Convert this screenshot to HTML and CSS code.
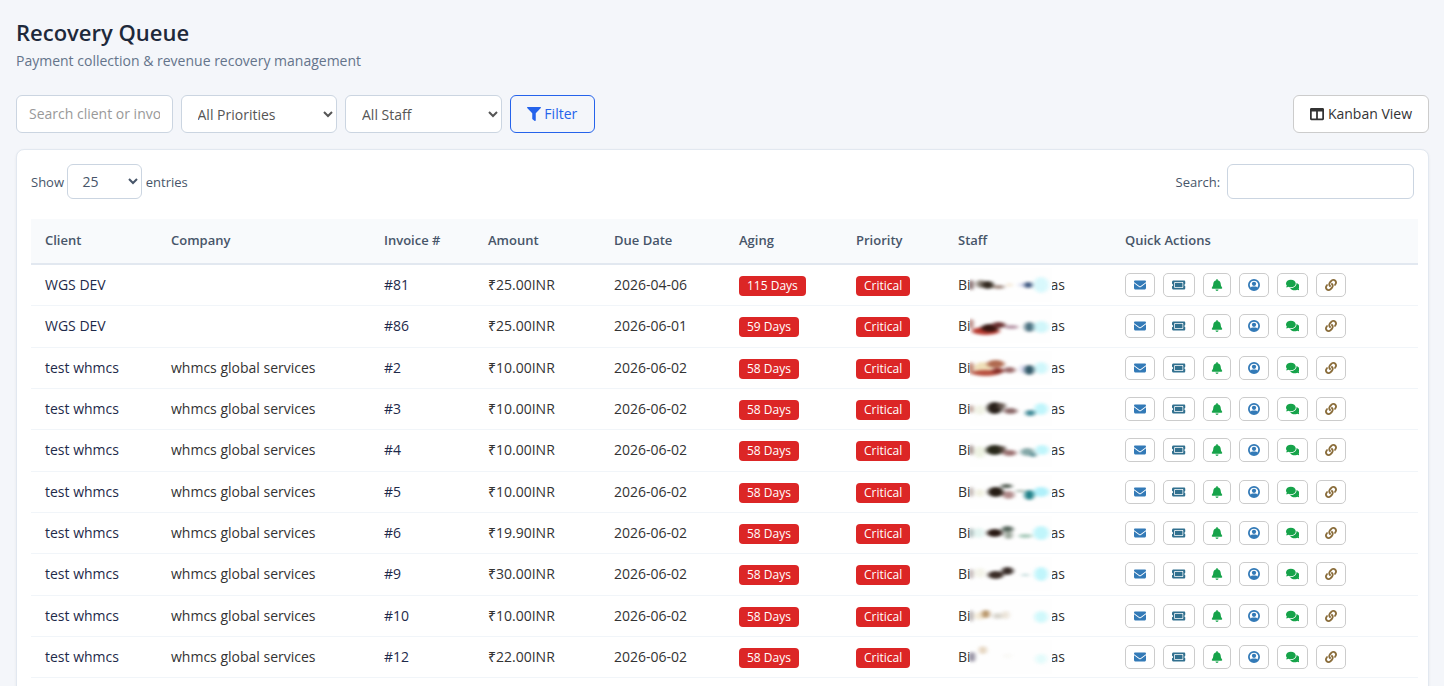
FILE: index.html
```html
<!DOCTYPE html>
<html lang="en">
<head>
    <meta charset="UTF-8">
    <meta name="viewport" content="width=device-width, initial-scale=1.0">
    <title>Recovery Queue</title>
    <link rel="stylesheet" href="styles.css">
</head>
<body>

    <!-- Icons -->
    <svg class="sprite">
        <symbol id="i-filter" viewBox="0 0 512 512"><path d="M487.976 0H24.028C2.71 0-8.047 25.866 7.058 40.971L192 225.941V432c0 7.831 3.821 15.17 10.237 19.662l80 55.98C298.02 518.69 320 507.493 320 487.98V225.941l184.947-184.97C520.021 25.896 509.338 0 487.976 0z"/></symbol>
        <symbol id="i-columns" viewBox="0 0 512 512"><path d="M464 32H48C21.49 32 0 53.49 0 80v352c0 26.51 21.49 48 48 48h416c26.51 0 48-21.49 48-48V80c0-26.51-21.49-48-48-48zM224 416H64V160h160v256zm224 0H288V160h160v256z"/></symbol>
        <symbol id="i-mail" viewBox="0 0 512 512"><path d="M48 64C21.5 64 0 85.5 0 112c0 15.1 7.1 29.3 19.2 38.4L236.8 313.6c11.4 8.5 27 8.5 38.4 0L492.8 150.4c12.1-9.1 19.2-23.3 19.2-38.4c0-26.5-21.5-48-48-48L48 64zM0 176L0 384c0 35.3 28.7 64 64 64l384 0c35.3 0 64-28.7 64-64l0-208L294.4 339.2c-22.8 17.1-54 17.1-76.8 0L0 176z"/></symbol>
        <symbol id="i-ticket" viewBox="0 0 576 512"><path fill-rule="evenodd" d="M64 64C28.7 64 0 92.7 0 128l0 64c0 8.8 7.4 15.7 15.7 18.6C34.5 217.1 48 235 48 256s-13.5 38.9-32.3 45.4C7.4 304.3 0 311.2 0 320l0 64c0 35.3 28.7 64 64 64l448 0c35.3 0 64-28.7 64-64l0-64c0-8.8-7.4-15.7-15.7-18.6C541.5 294.9 528 277 528 256s13.5-38.9 32.3-45.4c8.3-2.9 15.7-9.8 15.7-18.6l0-64c0-35.3-28.7-64-64-64L64 64zM128 128h320a32 32 0 0 1 32 32v192a32 32 0 0 1-32 32H128a32 32 0 0 1-32-32V160a32 32 0 0 1 32-32zM144 160a16 16 0 0 0-16 16v160a16 16 0 0 0 16 16h288a16 16 0 0 0 16-16V176a16 16 0 0 0-16-16z"/></symbol>
        <symbol id="i-bell" viewBox="0 0 448 512"><path d="M224 0c-17.7 0-32 14.3-32 32l0 19.2C119 66 64 130.6 64 208l0 18.8c0 47-17.3 92.4-48.5 127.6l-7.4 8.3c-8.4 9.4-10.4 22.9-5.3 34.4S19.4 416 32 416l384 0c12.6 0 24-7.4 29.2-18.9s3.1-25-5.3-34.4l-7.4-8.3C401.3 319.2 384 273.9 384 226.8l0-18.8c0-77.4-55-142-128-156.8L256 32c0-17.7-14.3-32-32-32zm45.3 493.3c12-12 18.7-28.3 18.7-45.3l-64 0-64 0c0 17 6.7 33.3 18.7 45.3s28.3 18.7 45.3 18.7s33.3-6.7 45.3-18.7z"/></symbol>
        <symbol id="i-user" viewBox="0 0 512 512"><path fill-rule="evenodd" d="M256 0a256 256 0 1 0 0 512a256 256 0 1 0 0-512zM256 72a184 184 0 0 1 150 290c-22-30-56-46-96-46H202c-40 0-74 16-96 46A184 184 0 0 1 256 72z"/><circle cx="256" cy="205" r="92"/></symbol>
        <symbol id="i-chat" viewBox="0 0 576 512"><path d="M416 192c0-88.4-93.1-160-208-160S0 103.6 0 192c0 34.3 14.1 65.9 38 92-13.4 30.2-35.5 54.2-35.8 54.5-2.2 2.3-2.8 5.7-1.5 8.7S4.8 352 8 352c36.6 0 66.9-12.3 88.7-25 32.2 15.7 70.3 25 111.3 25 114.9 0 208-71.6 208-160zm122 220c23.9-26 38-57.7 38-92 0-66.9-53.5-124.2-129.3-148.1.9 6.6 1.3 13.3 1.3 20.1 0 105.9-107.7 192-240 192-10.8 0-21.3-.8-31.7-1.9C207.8 439.6 281.8 480 368 480c41 0 79.1-9.2 111.3-25 21.8 12.7 52.1 25 88.7 25 3.2 0 6.1-1.9 7.3-4.8 1.3-2.9.7-6.3-1.5-8.7-.3-.3-22.4-24.2-35.8-54.5z"/></symbol>
        <symbol id="i-link" viewBox="0 0 512 512"><path d="M326.612 185.391c59.747 59.809 58.927 155.698.36 214.59-.11.12-.24.25-.36.37l-67.2 67.2c-59.27 59.27-155.699 59.262-214.96 0-59.27-59.26-59.27-155.7 0-214.96l37.106-37.106c9.84-9.84 26.786-3.3 27.294 10.606.648 17.722 3.826 35.527 9.69 52.721 1.986 5.822.567 12.262-3.783 16.612l-13.087 13.087c-28.026 28.026-28.905 73.66-1.155 101.96 28.024 28.579 74.086 28.749 102.325.51l67.2-67.19c28.191-28.191 28.073-73.757 0-101.83-3.701-3.694-7.429-6.564-10.341-8.569a16.037 16.037 0 0 1-6.947-12.606c-.396-10.567 3.348-21.456 11.698-29.806l21.054-21.055c5.521-5.521 14.182-6.199 20.584-1.731a152.482 152.482 0 0 1 20.522 17.197zM467.547 44.449c-59.261-59.262-155.69-59.27-214.96 0l-67.2 67.2c-.12.12-.25.25-.36.37-58.566 58.892-59.387 154.781.36 214.59a152.454 152.454 0 0 0 20.521 17.196c6.402 4.468 15.064 3.789 20.584-1.731l21.054-21.055c8.35-8.35 12.094-19.239 11.698-29.806a16.037 16.037 0 0 0-6.947-12.606c-2.912-2.005-6.64-4.875-10.341-8.569-28.073-28.073-28.191-73.639 0-101.83l67.2-67.19c28.239-28.239 74.3-28.069 102.325.51 27.75 28.3 26.872 73.934-1.155 101.96l-13.087 13.087c-4.35 4.35-5.769 10.79-3.783 16.612 5.864 17.194 9.042 34.999 9.69 52.721.509 13.906 17.454 20.446 27.294 10.606l37.106-37.106c59.271-59.259 59.271-155.699.001-214.959z"/></symbol>
    </svg>

    <h1>Recovery Queue</h1>
    <p class="subtitle">Payment collection &amp; revenue recovery management</p>

    <!-- Filters -->
    <div class="toolbar">
        <input type="text" class="field" placeholder="Search client or invoice">
        <select class="field">
            <option>All Priorities</option>
        </select>
        <select class="field">
            <option>All Staff</option>
        </select>
        <button class="btn btn-primary"><svg class="icon"><use href="#i-filter"/></svg> Filter</button>
        <button class="btn btn-default"><svg class="icon"><use href="#i-columns"/></svg> Kanban View</button>
    </div>

    <div class="card">
        <div class="table-top">
            <label>Show
                <select class="length">
                    <option>25</option>
                </select>
                entries</label>
            <label class="search">Search: <input type="search"></label>
        </div>

        <table>
            <colgroup>
                <col class="c-client">
                <col class="c-company">
                <col class="c-invoice">
                <col class="c-amount">
                <col class="c-due">
                <col class="c-aging">
                <col class="c-priority">
                <col class="c-staff">
                <col class="c-actions">
            </colgroup>
            <thead>
                <tr>
                    <th>Client</th>
                    <th>Company</th>
                    <th>Invoice #</th>
                    <th>Amount</th>
                    <th>Due Date</th>
                    <th>Aging</th>
                    <th>Priority</th>
                    <th>Staff</th>
                    <th>Quick Actions</th>
                </tr>
            </thead>
            <tbody id="queue"></tbody>
        </table>
    </div>

    <script src="queue.js"></script>
</body>
</html>
```

FILE: styles.css
```css
* {
    box-sizing: border-box;
}
body {
    margin: 0;
    padding: 18px 15px 0 16px;
    height: 686px;
    overflow: hidden;
    background: #f4f6fa;
    color: #333;
    font-family: "Open Sans", "Noto Sans", sans-serif;
    font-size: 14px;
    line-height: 20px;
}
input, select, button {
    font-family: inherit;
    font-size: 14px;
}
.sprite {
    display: none;
}
h1 {
    margin: 0;
    font-size: 22px;
    font-weight: 600;
    line-height: 28px;
    color: #1e293b;
}
.subtitle {
    margin: 5px 0 24px;
    color: #64748b;
}

/* Filters */
.toolbar {
    display: flex;
    gap: 8px;
    margin-bottom: 16px;
}
.field {
    width: 156.5px;
    height: 38px;
    padding: 6px 12px;
    background: #fff;
    border: 1px solid #cbd5e1;
    border-radius: 6px;
    color: #555;
}
input.field {
    padding-bottom: 8px;
}
.field::placeholder {
    color: #999;
}
.btn {
    height: 38px;
    padding: 0 16px 2px;
    border: 1px solid #ccc;
    border-radius: 6px;
    background: #fff;
    color: #333;
    white-space: nowrap;
}
.btn .icon {
    width: 14px;
    height: 14px;
    vertical-align: -2px;
}
.btn-primary {
    width: 85px;
    background: transparent;
    border-color: #2563eb;
    color: #2563eb;
}
.btn-default {
    margin-left: auto;
}
.icon {
    fill: currentColor;
}

/* Card */
.card {
    height: 545px;
    padding: 14px;
    background: #fff;
    border: 1px solid #e2e8f0;
    border-radius: 8px;
    box-shadow: 0 1px 3px rgba(15, 23, 42, 0.06);
}
.table-top {
    display: flex;
    justify-content: space-between;
    margin-bottom: 20px;
    font-size: 13px;
    color: #475569;
}
.length {
    width: 75px;
    height: 35px;
    padding: 5px 10px;
    background: #fff;
    border: 1px solid #cbd5e1;
    border-radius: 6px;
    color: #475569;
}
.search input {
    width: 187px;
    height: 35px;
    margin-left: 3.5px;
    background: #fff;
    border: 1px solid #cbd5e1;
    border-radius: 6px;
}

/* Table */
table {
    width: 1387px;
    table-layout: fixed;
    border-collapse: separate;
    border-spacing: 0;
}
.c-client { width: 126px; }
.c-company { width: 213px; }
.c-invoice { width: 104px; }
.c-amount { width: 126px; }
.c-due { width: 125px; }
.c-aging { width: 117px; }
.c-priority { width: 102px; }
.c-staff { width: 167px; }
.c-actions { width: 307px; }
th {
    height: 45.9px;
    padding: 0 14px 2px;
    background: #f8fafc;
    border-bottom: 2px solid #e2e8f0;
    color: #475569;
    font-size: 13px;
    font-weight: 600;
    text-align: left;
}
td {
    height: 41.35px;
    padding: 0 14px;
    border-bottom: 1px solid #f1f5f9;
    white-space: nowrap;
}
.client, .invoice {
    color: #1e2a4a;
}
.badge {
    display: inline-block;
    margin-top: 1.4px;
    padding: 0 8px;
    background: #dc2626;
    border-radius: 4px;
    color: #fff;
    font-size: 12px;
    vertical-align: middle;
}
.staff {
    display: flex;
}
.smudge {
    position: relative;
    width: 82px;
    height: 34px;
    margin: -7px -1px -7px -1px;
    background: #fefefe;
}
.filters {
    display: block;
    width: 0;
    height: 0;
}
.actions {
    display: flex;
    gap: 8px;
}
.action {
    display: flex;
    align-items: center;
    justify-content: center;
    width: 30px;
    height: 24px;
    padding: 0;
    background: #fff;
    border: 1px solid #ccc;
    border-radius: 5px;
}
.action .icon {
    width: 12px;
    height: 12px;
}
.action.ticket, .action.chat {
    width: 31.5px;
}
.action.bell {
    width: 28px;
}
.action.ticket .icon, .action.chat .icon {
    width: 13.5px;
}
.mail, .user { color: #337ab7; }
.ticket { color: #31708f; }
.bell, .chat { color: #16a34a; }
.link { color: #8a6d3b; }
```

FILE: queue.js
```js
// Invoices: client, company, invoice, amount, due date, aging
const invoices = [
    ["WGS DEV", "", "81", "25.00", "2026-04-06", 115],
    ["WGS DEV", "", "86", "25.00", "2026-06-01", 59],
    ["test whmcs", "whmcs global services", "2", "10.00", "2026-06-02", 58],
    ["test whmcs", "whmcs global services", "3", "10.00", "2026-06-02", 58],
    ["test whmcs", "whmcs global services", "4", "10.00", "2026-06-02", 58],
    ["test whmcs", "whmcs global services", "5", "10.00", "2026-06-02", 58],
    ["test whmcs", "whmcs global services", "6", "19.90", "2026-06-02", 58],
    ["test whmcs", "whmcs global services", "9", "30.00", "2026-06-02", 58],
    ["test whmcs", "whmcs global services", "10", "10.00", "2026-06-02", 58],
    ["test whmcs", "whmcs global services", "12", "22.00", "2026-06-02", 58]
];

// Masked part of the staff name: cx, cy, rx, ry, colour
const smudges = [
    [[1, 17, 2, 5, "#5a3a3a"], [11, 16, 5, 4, "#8a8278"], [18, 17, 6, 4, "#332a20"], [29, 19, 6, 2, "#a08a80"], [40, 17, 3, 2, "#f5ead8"], [53, 17, 4, 2, "#d8dcf0"], [59, 17, 4, 3, "#35507a"], [72, 17, 8, 8, "#d8f8fc"]],
    [[1, 15, 2, 5, "#a06058"], [16, 22, 14, 4, "#b83a30"], [20, 19, 9, 4, "#351510"], [29, 16, 7, 3, "#6a3030"], [42, 18, 7, 2, "#b898a8"], [60, 18, 5, 5, "#4a7080"], [72, 18, 8, 6, "#d0f6fa"]],
    [[1, 17, 2, 6, "#a85840"], [13, 17, 9, 6, "#efdfb8"], [26, 13, 9, 4, "#b06a50"], [16, 22, 14, 3, "#b85040"], [28, 20, 6, 3, "#8a3028"], [40, 19, 6, 3, "#9a6868"], [54, 18, 4, 4, "#dcdcf0"], [60, 19, 5, 5, "#305868"], [72, 17, 7, 6, "#d0f7fb"]],
    [[1, 17, 2, 4, "#ad8a80"], [10, 18, 6, 5, "#f1f3e6"], [25, 16, 8, 6, "#28201a"], [32, 14, 4, 3, "#685a52"], [41, 19, 7, 3, "#8a6868"], [61, 21, 5, 3, "#408a98"], [72, 17, 7, 6, "#c0f5fb"]],
    [[1, 17, 2, 5, "#8a7470"], [10, 19, 6, 6, "#edf2e2"], [25, 17, 9, 5, "#28281a"], [33, 16, 3, 3, "#584840"], [40, 20, 7, 3, "#9a7070"], [58, 19, 7, 4, "#85a8a8"], [64, 22, 3, 2, "#508890"], [73, 17, 7, 5, "#c0f5fb"]],
    [[1, 17, 1.5, 5, "#988680"], [10, 18, 5, 4, "#f1f1e2"], [26, 17, 8, 5, "#251c14"], [37, 11, 6, 2, "#505a50"], [39, 20, 6, 4, "#b08a8a"], [51, 16, 5, 1, "#9fb0a5"], [60, 20, 5, 5, "#208088"], [72, 17, 8, 5, "#b0f0fa"]],
    [[1, 17, 2, 5, "#9aacac"], [9, 17, 6, 5, "#e4f5f1"], [25, 17, 8, 4, "#281812"], [38, 13, 6, 3, "#56665c"], [39, 19, 4, 4, "#9aa59a"], [56, 20, 7, 2, "#a5c8b8"], [72, 17, 8, 7, "#c0f5fb"]],
    [[1, 17, 1.5, 5, "#9a8888"], [10, 16, 6, 5, "#f4f4ea"], [26, 18, 8, 4, "#3a2c26"], [38, 14, 6, 4, "#382c28"], [56, 18, 4, 1, "#b8d5d5"], [72, 17, 7, 7, "#c0f5fb"]],
    [[1, 17, 1.5, 6, "#8a8080"], [10, 17, 6, 4, "#f3ead8"], [16, 15, 4, 4, "#b8966a"], [28, 17, 5, 3, "#d8d5cd"], [36, 16, 4, 4, "#ece5da"], [72, 18, 7, 6, "#d0f8fb"]],
    [[2, 17, 3, 5, "#8a8598"], [13, 10, 4, 4, "#e5d5c0"], [38, 16, 4, 2, "#f9f8f4"], [72, 19, 6, 5, "#e4fbfb"]]
];

const actions = ["mail", "ticket", "bell", "user", "chat", "link"];

function smudge(blobs) {
    const shapes = blobs.map(([x, y, rx, ry, color]) =>
        `<ellipse cx="${x}" cy="${y}" rx="${rx}" ry="${ry}" fill="${color}"/>`
    ).join("");
    return `<svg class="smudge" viewBox="0 0 83 34">
        <g filter="url(#soft)">${shapes}</g></svg>`;
}

// Shared blur for the masked names
document.querySelector(".sprite").insertAdjacentHTML("afterend",
    `<svg class="filters"><filter id="soft" x="-20%" y="-50%" width="140%" height="200%" color-interpolation-filters="sRGB"><feGaussianBlur stdDeviation="1.9 1.5"/></filter></svg>`);

const queue = document.getElementById("queue");
invoices.forEach(([client, company, id, amount, due, days], i) => {
    const buttons = actions.map(name =>
        `<button class="action ${name}"><svg class="icon"><use href="#i-${name}"/></svg></button>`
    ).join("");
    const row = document.createElement("tr");
    row.innerHTML = `
        <td class="client">${client}</td>
        <td>${company}</td>
        <td class="invoice">#${id}</td>
        <td>₹${amount}INR</td>
        <td>${due}</td>
        <td><span class="badge">${days} Days</span></td>
        <td><span class="badge">Critical</span></td>
        <td><div class="staff">Bi${smudge(smudges[i])}as</div></td>
        <td><div class="actions">${buttons}</div></td>`;
    queue.appendChild(row);
});
```
